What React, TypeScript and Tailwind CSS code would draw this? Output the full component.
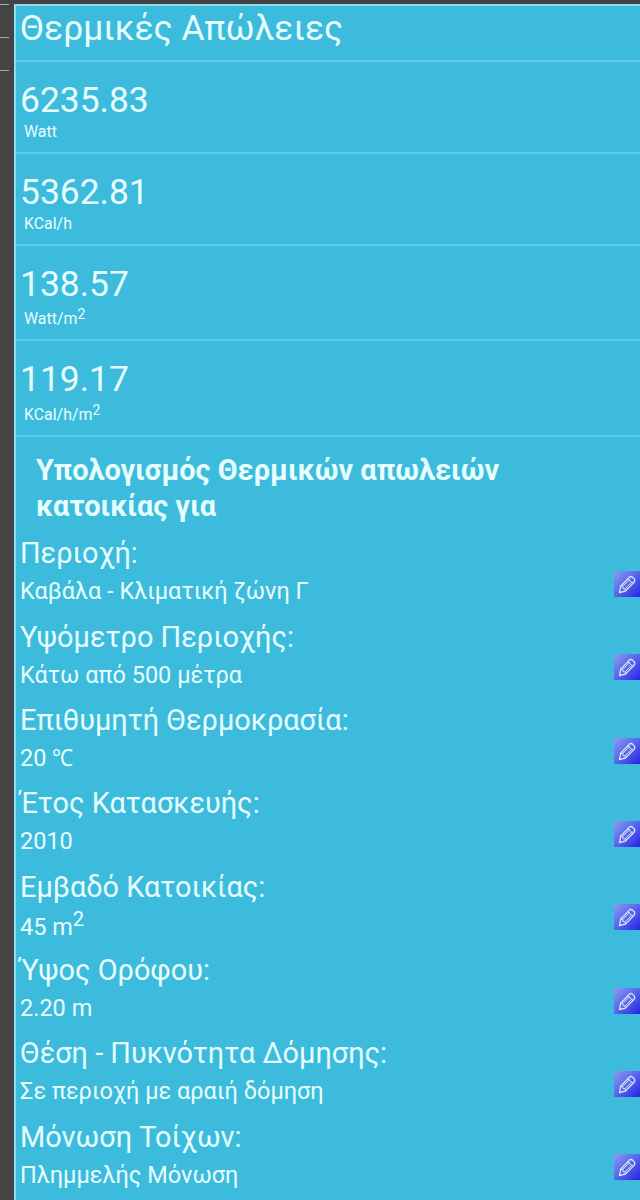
import React from 'react';

interface Result {
  value: string;
  unit: string;
  squared?: boolean;
  height: string;
  unitClass: string;
}

interface Detail {
  label: string;
  value: string;
  symbol?: string;
  squared?: boolean;
}

const results: Result[] = [
  { value: '6235.83', unit: 'Watt', height: 'h-[92px]', unitClass: 'mt-px' },
  { value: '5362.81', unit: 'KCal/h', height: 'h-[92px]', unitClass: 'mt-px' },
  { value: '138.57', unit: 'Watt/m', squared: true, height: 'h-[95px]', unitClass: 'mt-1' },
  { value: '119.17', unit: 'KCal/h/m', squared: true, height: 'h-[96px]', unitClass: 'mt-[5px]' },
];

const details: Detail[] = [
  { label: 'Περιοχή:', value: 'Καβάλα - Κλιματική ζώνη Γ' },
  { label: 'Υψόμετρο Περιοχής:', value: 'Κάτω από 500 μέτρα' },
  { label: 'Επιθυμητή Θερμοκρασία:', value: '20 ', symbol: '℃' },
  { label: 'Έτος Κατασκευής:', value: '2010' },
  { label: 'Εμβαδό Κατοικίας:', value: '45 m', squared: true },
  { label: 'Ύψος Ορόφου:', value: '2.20 m' },
  { label: 'Θέση - Πυκνότητα Δόμησης:', value: 'Σε περιοχή με αραιή δόμηση' },
  { label: 'Μόνωση Τοίχων:', value: 'Πλημμελής Μόνωση' },
];

function PencilIcon() {
  return (
    <svg viewBox="0 0 26 26" className="block h-[26px] w-[26px]">
      <defs>
        <linearGradient id="pencil-bg" x1="0" y1="0" x2="1" y2="1">
          <stop offset="0" stopColor="#8c9cf0" />
          <stop offset="0.5" stopColor="#5866ea" />
          <stop offset="1" stopColor="#2424e2" />
        </linearGradient>
      </defs>
      <rect width="26" height="26" rx="0.5" fill="url(#pencil-bg)" />
      <g fill="none" stroke="#dfe5ff" strokeWidth="1.3" strokeLinejoin="round" strokeLinecap="round">
        <path d="M5.5 21.5 6.7 15.2 15.4 6.1Q16.8 4.9 18.4 6.1L20.4 8Q21.4 9.5 20.2 11L11.4 20.1Z" />
        <path d="M6.7 15.2 8.7 15.5 9 17.6 11.2 18 11.4 20.1M14 7.7 18.7 12.5M9 15.2 15.7 8.6M11.3 17.6 18 10.8" strokeWidth="1" />
      </g>
    </svg>
  );
}

function ResultRow({ value, unit, squared, height, unitClass }: Result) {
  return (
    <div className={`${height} border-b-2 border-[#5fcae6] pl-1 pt-[18px]`}>
      <div className="h-10 text-[35.4px] leading-10">{value}</div>
      <div className={`${unitClass} pl-1 text-[15.9px] leading-[22px]`}>
        {unit}
        {squared && <sup className="relative -top-[5px] align-baseline text-[14px] leading-none">2</sup>}
      </div>
    </div>
  );
}

function DetailRow({ label, value, symbol, squared }: Detail) {
  return (
    <div className="flex h-[83.35px] justify-between">
      <div className="pl-1">
        <div className="h-10 whitespace-nowrap text-[28.9px] leading-10">{label}</div>
        <div className={`${squared ? 'mt-0.5' : 'mt-0'} whitespace-nowrap text-[23.5px] leading-9`}>
          {value}
          {symbol && <span className="inline-block origin-left scale-x-90">{symbol}</span>}
          {squared && <sup className="relative -top-[9px] align-baseline text-[20px] leading-none">2</sup>}
        </div>
      </div>
      <div className="pt-[37.6px]">
        <PencilIcon />
      </div>
    </div>
  );
}

function App() {
  return (
    <div className="flex h-[1200px] overflow-hidden bg-[#444444] font-['Roboto',sans-serif] text-[#e6feff]">
      <div className="w-[14px] shrink-0 pt-1">
        <div className="h-[33px] w-[9px] border-t border-[#a5a9aa]" />
        <div className="h-[34px] w-[9px] border-y border-[#a5a9aa]" />
      </div>
      <div className="mt-1 min-w-0 flex-1 border-l-2 border-t-2 border-[#8edcf0] bg-[#3cbbdd]">
        <div className="h-[56px] border-b-2 border-[#5fcae6] pl-1">
          <h1 className="whitespace-nowrap text-[35.4px] leading-[44px]">Θερμικές Απώλειες</h1>
        </div>
        {results.map((result) => (
          <ResultRow key={result.unit} {...result} />
        ))}
        <h2 className="h-[96.4px] pl-[20px] pt-[15px] text-[28.95px] font-bold leading-9">
          Υπολογισμός Θερμικών απωλειών
          <br />
          κατοικίας για
        </h2>
        {details.map((detail) => (
          <DetailRow key={detail.label} {...detail} />
        ))}
      </div>
    </div>
  );
}

export default App;
